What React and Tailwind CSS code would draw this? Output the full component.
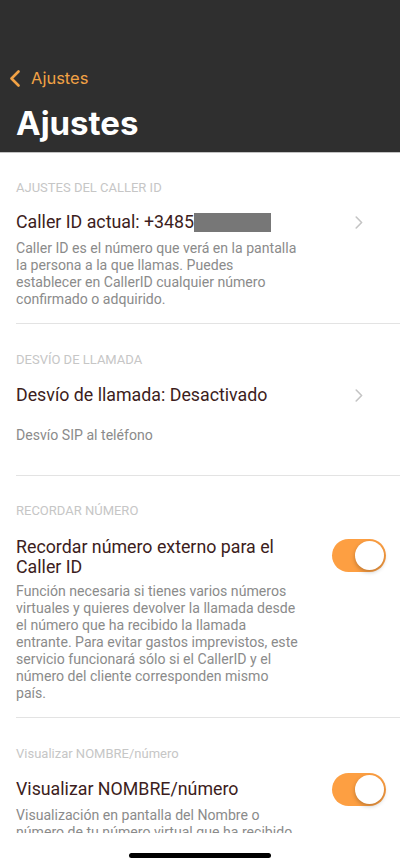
import React from "react";

const font = { fontFamily: "Roboto, 'Noto Sans', sans-serif" };
const inter = { fontFamily: "Inter, 'Noto Sans', sans-serif" };

function Toggle({ className = "" }) {
  return (
    <div className={`flex h-[33px] w-[54px] shrink-0 items-center justify-end rounded-full bg-[#fd9f42] pr-[2px] ${className}`}>
      <div className="h-[29px] w-[29px] rounded-full bg-white shadow-[0_2px_4px_rgba(0,0,0,0.25)]" />
    </div>
  );
}

function Chevron() {
  return (
    <svg width="8" height="13" viewBox="0 0 8 13" fill="none" className="shrink-0">
      <path d="M1.2 1 L6.6 6.5 L1.2 12" stroke="#c4c4c4" strokeWidth="1.6" strokeLinecap="round" strokeLinejoin="round" />
    </svg>
  );
}

function SectionHeader({ children }) {
  return <div className="h-4 text-[13px] leading-4 text-[#c6c6c6]">{children}</div>;
}

function Desc({ children, className = "" }) {
  return <div className={`text-[14.1px] leading-[17px] text-[#8b8b8b] ${className}`}>{children}</div>;
}

export default function App() {
  return (
    <div className="flex h-[867px] w-[400px] flex-col overflow-hidden bg-white" style={font}>
      {/* Nav header */}
      <div className="flex h-[153px] shrink-0 flex-col border-b border-[#c2c2c2] bg-[#2f2f2f] pt-[66px]" style={inter}>
        <div className="flex h-6 items-center pl-[9px]">
          <svg width="12" height="17" viewBox="0 0 12 17" fill="none">
            <path d="M9.5 1.5 L2.5 8.5 L9.5 15.5" stroke="#f2a245" strokeWidth="2.6" strokeLinecap="round" strokeLinejoin="round" />
          </svg>
          <span className="ml-[10px] text-[16.5px] leading-6 text-[#f2a245]">Ajustes</span>
        </div>
        <div className="mt-[15px] h-9 pl-[16px] text-[33px] font-bold leading-9 text-white">Ajustes</div>
      </div>

      {/* Scroll content */}
      <div className="h-[680px] shrink-0 overflow-hidden">
        {/* Section 1 */}
        <div className="ml-4 border-b border-[#e3e3e3] pb-[15px] pt-[27px]">
          <SectionHeader>AJUSTES DEL CALLER ID</SectionHeader>
          <div className="mt-4 flex h-5 items-center justify-between pr-[37px]">
            <div className="flex items-center text-[17.8px] leading-5 text-[#3c1d20]">
              <span>Caller ID actual: +3485</span>
              <span className="h-[19px] w-[77px] bg-[#777777]" />
            </div>
            <Chevron />
          </div>
          <Desc className="mt-2">
            Caller ID es el número que verá en la pantalla
            <br />
            la persona a la que llamas. Puedes
            <br />
            establecer en CallerID cualquier número
            <br />
            confirmado o adquirido.
          </Desc>
        </div>

        {/* Section 2 */}
        <div className="ml-4 h-[152px] border-b border-[#e3e3e3] pt-[28px]">
          <SectionHeader>DESVÍO DE LLAMADA</SectionHeader>
          <div className="mt-[17px] flex h-5 items-center justify-between pr-[37px]">
            <div className="text-[17.8px] leading-5 text-[#3c1d20]">Desvío de llamada: Desactivado</div>
            <Chevron />
          </div>
          <Desc className="mt-[22px]">Desvío SIP al teléfono</Desc>
        </div>

        {/* Section 3 */}
        <div className="ml-4 h-[242px] border-b border-[#e3e3e3] pt-[27px]">
          <SectionHeader>RECORDAR NÚMERO</SectionHeader>
          <div className="mt-[18px] flex items-start justify-between pr-[14px]">
            <div className="text-[17.8px] leading-5 text-[#3c1d20]">
              Recordar número externo para el
              <br />
              Caller ID
            </div>
            <Toggle className="mt-[2px]" />
          </div>
          <Desc className="mt-[6px]">
            Función necesaria si tienes varios números
            <br />
            virtuales y quieres devolver la llamada desde
            <br />
            el número que ha recibido la llamada
            <br />
            entrante. Para evitar gastos imprevistos, este
            <br />
            servicio funcionará sólo si el CallerID y el
            <br />
            número del cliente corresponden mismo
            <br />
            país.
          </Desc>
        </div>

        {/* Section 4 */}
        <div className="ml-4 pt-[28px]">
          <SectionHeader>Visualizar NOMBRE/número</SectionHeader>
          <div className="mt-[17px] flex h-5 items-center justify-between pr-[14px]">
            <div className="text-[17.8px] leading-5 text-[#3c1d20]">Visualizar NOMBRE/número</div>
            <Toggle />
          </div>
          <Desc className="mt-2">
            Visualización en pantalla del Nombre o
            <br />
            número de tu número virtual que ha recibido
          </Desc>
        </div>
      </div>

      {/* Home indicator area */}
      <div className="flex h-[34px] shrink-0 justify-center bg-white pt-5">
        <div className="h-[5px] w-[142px] rounded-full bg-black" />
      </div>
    </div>
  );
}
